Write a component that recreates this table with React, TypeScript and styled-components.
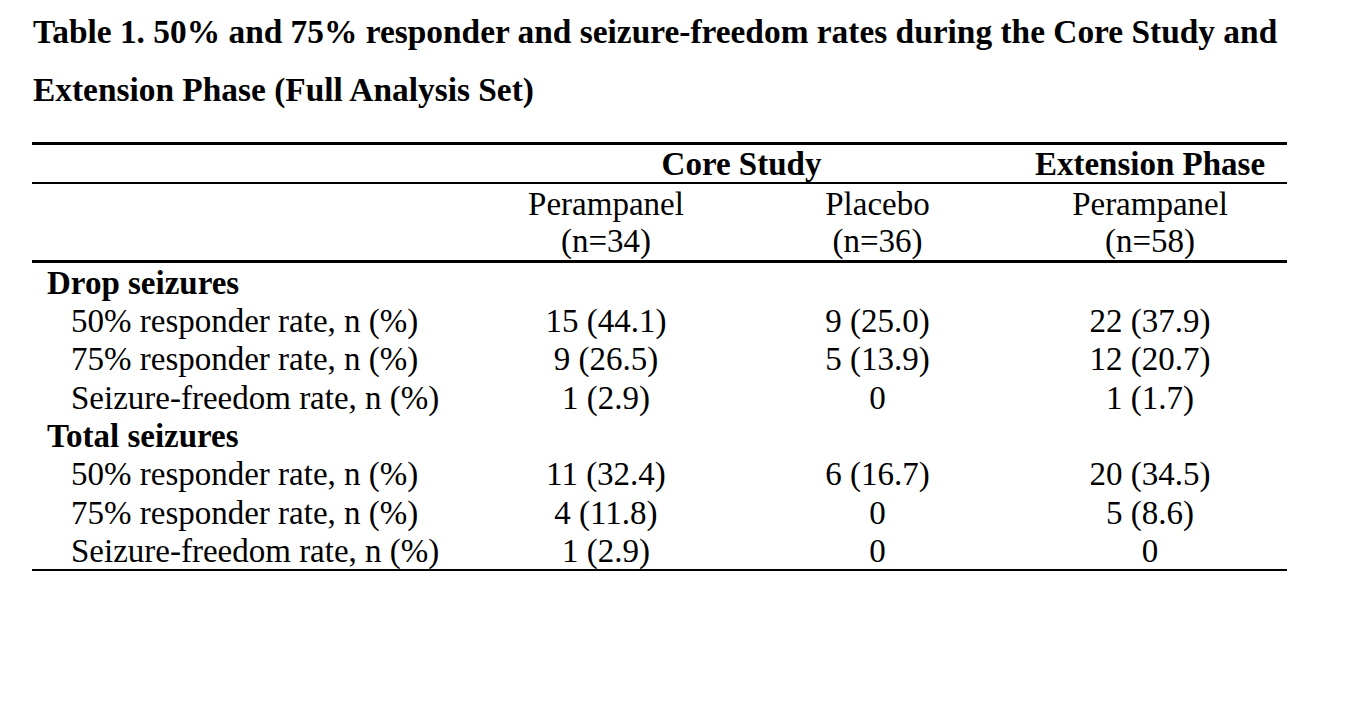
import * as React from "react";
import styled, { createGlobalStyle } from "styled-components";

const GlobalStyle = createGlobalStyle`
  html, body {
    margin: 0;
    padding: 0;
    background: #ffffff;
  }
  body {
    font-family: "Liberation Serif", "Times New Roman", serif;
    color: #000000;
  }
`;

type Row = {
  label: string;
  values?: [string, string, string];
  section?: boolean;
};

const rows: Row[] = [
  { label: "Drop seizures", section: true },
  { label: "50% responder rate, n (%)", values: ["15 (44.1)", "9 (25.0)", "22 (37.9)"] },
  { label: "75% responder rate, n (%)", values: ["9 (26.5)", "5 (13.9)", "12 (20.7)"] },
  { label: "Seizure-freedom rate, n (%)", values: ["1 (2.9)", "0", "1 (1.7)"] },
  { label: "Total seizures", section: true },
  { label: "50% responder rate, n (%)", values: ["11 (32.4)", "6 (16.7)", "20 (34.5)"] },
  { label: "75% responder rate, n (%)", values: ["4 (11.8)", "0", "5 (8.6)"] },
  { label: "Seizure-freedom rate, n (%)", values: ["1 (2.9)", "0", "0"] },
];

export default function App() {
  return (
    <Page>
      <GlobalStyle />
      <Title>
        Table 1. 50% and 75% responder and seizure-freedom rates during the Core Study and
        <br />
        Extension Phase (Full Analysis Set)
      </Title>
      <Table>
        <colgroup>
          <col style={{ width: 438 }} />
          <col style={{ width: 272 }} />
          <col style={{ width: 271 }} />
          <col style={{ width: 274 }} />
        </colgroup>
        <thead>
          <GroupRow>
            <th />
            <GroupCell colSpan={2}>Core Study</GroupCell>
            <GroupCell>Extension Phase</GroupCell>
          </GroupRow>
          <ArmRow>
            <th />
            <ArmCell>
              Perampanel
              <br />
              (n=34)
            </ArmCell>
            <ArmCell>
              Placebo
              <br />
              (n=36)
            </ArmCell>
            <ArmCell>
              Perampanel
              <br />
              (n=58)
            </ArmCell>
          </ArmRow>
        </thead>
        <tbody>
          {rows.map((row, i) =>
            row.section ? (
              <BodyRow key={i}>
                <SectionCell colSpan={4}>{row.label}</SectionCell>
              </BodyRow>
            ) : (
              <BodyRow key={i}>
                <LabelCell>{row.label}</LabelCell>
                {row.values?.map((v, j) => (
                  <ValueCell key={j}>{v}</ValueCell>
                ))}
              </BodyRow>
            )
          )}
        </tbody>
      </Table>
    </Page>
  );
}

const Page = styled.div`
  padding: 3px 0 0 32px;
  width: 1255px;
`;

const Title = styled.h1`
  margin: 0 0 23px 1px;
  font-size: 33.4px;
  font-weight: bold;
  line-height: 58px;
  white-space: nowrap;
`;

const Table = styled.table`
  width: 1255px;
  border-collapse: collapse;
  table-layout: fixed;
  font-size: 33px;
  border-top: 3px solid #000000;
  border-bottom: 2px solid #000000;
`;

const GroupRow = styled.tr`
  border-bottom: 2px solid #000000;
`;

const GroupCell = styled.th`
  padding: 2px 0 0;
  height: 35px;
  line-height: 35px;
  font-weight: bold;
  text-align: center;
`;

const ArmRow = styled.tr`
  border-bottom: 3px solid #000000;
`;

const ArmCell = styled.th`
  padding: 2px 0 0;
  line-height: 37px;
  font-weight: normal;
  text-align: center;
`;

const BodyRow = styled.tr`
  height: 38.3px;
`;

const SectionCell = styled.td`
  padding: 2px 0 0 15px;
  line-height: 36px;
  font-weight: bold;
`;

const LabelCell = styled.td`
  padding: 2px 0 0 39px;
  line-height: 36px;
  white-space: nowrap;
`;

const ValueCell = styled.td`
  padding: 2px 0 0;
  line-height: 36px;
  text-align: center;
`;
